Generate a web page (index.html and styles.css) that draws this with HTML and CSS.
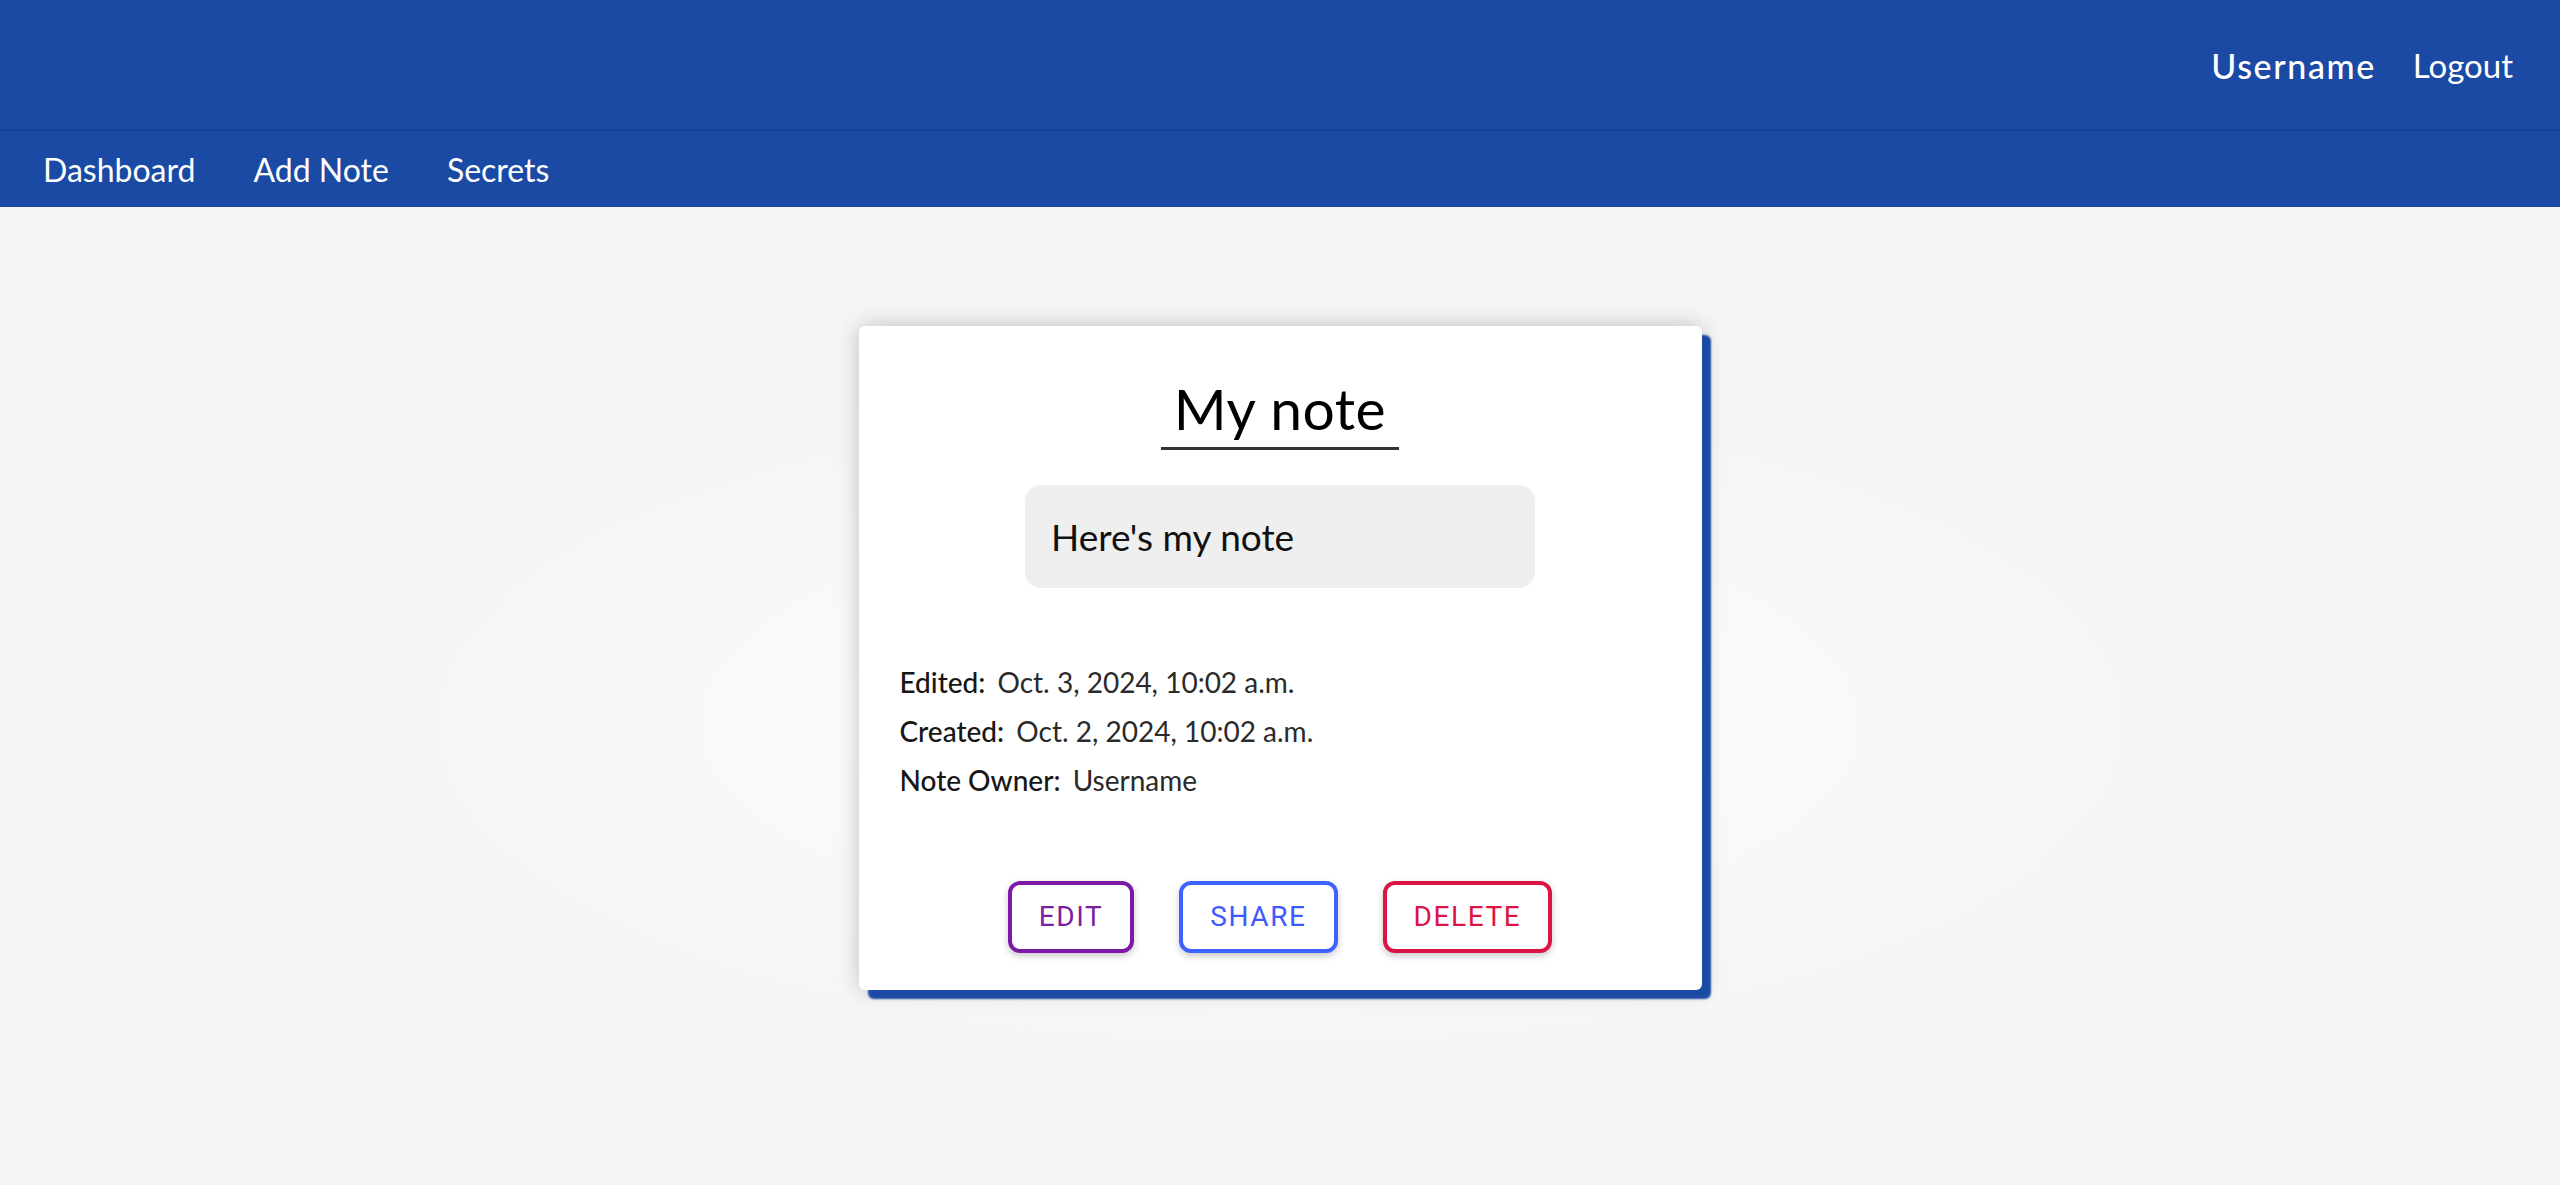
FILE: index.html
```html
<!DOCTYPE html>
<html lang="en">
<head>
<meta charset="utf-8">
<title>My note</title>
<link rel="stylesheet" href="styles.css">
</head>
<body>
<header class="site-header">
  <div class="topbar">
    <span class="user">Username</span>
    <a class="logout" href="#">Logout</a>
  </div>
  <nav class="navbar">
    <a class="nav-link" href="#">Dashboard</a>
    <a class="nav-link" href="#">Add Note</a>
    <a class="nav-link" href="#">Secrets</a>
  </nav>
</header>
<main class="main">
  <article class="card">
    <h1 class="title">My note</h1>
    <div class="note-body">Here's my note</div>
    <div class="meta">
      <p class="meta-row"><span class="meta-label">Edited:</span> <span class="meta-value">Oct. 3, 2024, 10:02 a.m.</span></p>
      <p class="meta-row"><span class="meta-label">Created:</span> <span class="meta-value">Oct. 2, 2024, 10:02 a.m.</span></p>
      <p class="meta-row"><span class="meta-label">Note Owner:</span> <span class="meta-value">Username</span></p>
    </div>
    <div class="actions">
      <button class="btn btn-edit">Edit</button>
      <button class="btn btn-share">Share</button>
      <button class="btn btn-delete">Delete</button>
    </div>
  </article>
</main>
</body>
</html>
```
FILE: styles.css
```css
html, body {
  margin: 0;
  padding: 0;
}

body {
  min-height: 100vh;
  background: radial-gradient(ellipse 950px 360px at 50% 61%, #fdfdfd 0%, #f5f5f5 100%) #f5f5f5;
  font-family: "Lato", "Open Sans", sans-serif;
  color: #111;
}

.topbar {
  height: 130px;
  background: #1b4aa4;
  border-bottom: 1px solid #153c86;
  display: flex;
  justify-content: flex-end;
  align-items: center;
  gap: 37px;
  padding-right: 47px;
}

.user {
  color: #fff;
  font-size: 34px;
  font-weight: 500;
  letter-spacing: 1.6px;
}

.logout {
  color: #fff;
  font-size: 33px;
  text-decoration: none;
}

.navbar {
  height: 76px;
  background: #1b4aa4;
  display: flex;
  align-items: center;
  gap: 58px;
  padding-left: 43px;
}

.nav-link {
  color: #fff;
  font-size: 32px;
  text-decoration: none;
}

.main {
  display: flex;
  justify-content: center;
  padding-top: 119px;
}

.card {
  width: 843px;
  box-sizing: border-box;
  background: #fff;
  border-radius: 6px;
  box-shadow: 9px 9px 2px #1b4aa4, 0 0 22px rgba(0, 0, 0, 0.22);
  padding: 50px 41px 37px;
  display: flex;
  flex-direction: column;
  align-items: center;
}

.title {
  margin: 0 0 35px;
  font-size: 57px;
  font-weight: 400;
  line-height: 64px;
  letter-spacing: 0.5px;
  color: #000;
  padding: 0 13px 7px;
  border-bottom: 3px solid #333;
}

.note-body {
  width: 510px;
  box-sizing: border-box;
  height: 103px;
  line-height: 103px;
  padding: 0 26px;
  background: #efefef;
  border-radius: 16px;
  font-size: 37px;
  color: #111;
}

.meta {
  align-self: stretch;
  margin-top: 70px;
}

.meta-row {
  margin: 0;
  font-size: 28px;
  line-height: 49px;
  color: #333;
}

.meta-label {
  color: #161616;
  font-weight: 500;
  margin-right: 5px;
}

.meta-value {
  color: #2a2a2a;
}

.actions {
  margin-top: 76px;
  display: flex;
  gap: 45px;
}

.btn {
  height: 72px;
  box-sizing: border-box;
  background: #fff;
  border: 4px solid;
  border-radius: 12px;
  padding: 0 27px;
  font-family: "Roboto", sans-serif;
  font-size: 28px;
  font-weight: 400;
  letter-spacing: 1.6px;
  text-transform: uppercase;
  line-height: 64px;
  box-shadow: 0 3px 7px rgba(0, 0, 0, 0.22);
}

.btn-edit {
  color: #7b1fa2;
  border-color: #7b1aa6;
}

.btn-share {
  color: #3d5afe;
  border-color: #3d62fe;
}

.btn-delete {
  color: #dc1446;
  border-color: #dc1446;
}
```
